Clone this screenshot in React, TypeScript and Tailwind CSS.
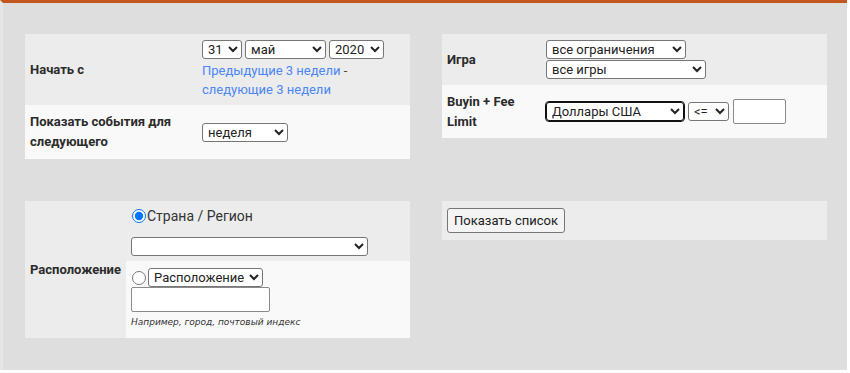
import React from 'react';

const selectCls =
  'h-[19px] bg-white border border-[#767676] rounded-[3px] text-[13px] leading-none text-[#222] pl-[1px] py-0';

const App: React.FC = () => {
  return (
    <div className="w-[850px] h-[373px] bg-white font-['Roboto',sans-serif] text-[#2b2b2b]">
      <div className="w-[847px] h-[370px] bg-[#dedede] border-t-[3px] border-l-[3px] border-t-[#c2581e] border-l-[#e6e6e6] pl-[22px] pt-[31px]">
        <div className="grid grid-cols-[385px_385px] gap-x-8 gap-y-[42px] items-start">
          {/* Date / period */}
          <div className="flex flex-col">
            <div className="flex bg-[#ececec] h-[71px]">
              <div className="w-[177px] pl-[5px] flex items-center text-[13px] font-bold">Начать с</div>
              <div className="pt-[6px]">
                <div className="flex gap-[3px]">
                  <select className={`${selectCls} w-[40px]`} defaultValue="31">
                    <option>31</option>
                  </select>
                  <select className={`${selectCls} w-[81px]`} defaultValue="май">
                    <option>май</option>
                  </select>
                  <select className={`${selectCls} w-[55px]`} defaultValue="2020">
                    <option>2020</option>
                  </select>
                </div>
                <div className="text-[13px] leading-[19px] mt-[2px]">
                  <a href="#" className="text-[#4a86f5]">Предыдущие 3 недели</a>
                  <span className="text-[#444]"> -</span>
                  <br />
                  <a href="#" className="text-[#4a86f5]">следующие 3 недели</a>
                </div>
              </div>
            </div>
            <div className="flex bg-[#f9f9f9] h-[54px]">
              <div className="w-[177px] pl-[5px] flex items-center text-[13px] font-bold leading-[20px]">
                Показать события для следующего
              </div>
              <div className="flex items-center">
                <select className={`${selectCls} w-[86px]`} defaultValue="неделя">
                  <option>неделя</option>
                </select>
              </div>
            </div>
          </div>

          {/* Game / limits */}
          <div className="flex flex-col">
            <div className="flex bg-[#ececec] h-[51px]">
              <div className="w-[104px] pl-[5px] flex items-center text-[13px] font-bold">Игра</div>
              <div className="pt-[6px] flex flex-col gap-[1px]">
                <select className={`${selectCls} w-[140px]`} defaultValue="все ограничения">
                  <option>все ограничения</option>
                </select>
                <select className={`${selectCls} w-[160px]`} defaultValue="все игры">
                  <option>все игры</option>
                </select>
              </div>
            </div>
            <div className="flex bg-[#f9f9f9] h-[53px]">
              <div className="w-[104px] pl-[5px] flex items-center text-[13px] font-bold leading-[20px]">
                Buyin + Fee Limit
              </div>
              <div className="flex items-center gap-[3px]">
                <select
                  className="h-[19px] w-[138px] bg-white border border-[#111] outline-1 outline-[#111] rounded-[3px] text-[13px] leading-none text-[#222] pl-[1px] py-0"
                  defaultValue="Доллары США"
                >
                  <option>Доллары США</option>
                </select>
                <select className={`${selectCls} ml-[1px] w-[41px] text-[11px]`} defaultValue="<=">
                  <option>&lt;=</option>
                </select>
                <input
                  type="text"
                  className="ml-[1px] w-[53px] h-[25px] bg-white border border-[#8a8a8a] rounded-[2px]"
                />
              </div>
            </div>
          </div>

          {/* Location */}
          <div className="flex bg-[#ececec] h-[137px]">
            <div className="w-[101px] pl-[5px] flex items-center text-[13px] font-bold">Расположение</div>
            <div className="flex-1 flex flex-col">
              <div className="h-[60px] pl-[5px] pt-[7px]">
                <label className="flex items-center h-[16px] text-[14px] text-[#333]">
                  <input type="radio" name="loc" defaultChecked className="w-[14px] h-[14px] m-0 mr-[1px] ml-[1px]" />
                  Страна / Регион
                </label>
                <select className={`${selectCls} w-[237px] mt-[13px] block`} defaultValue="">
                  <option value=""></option>
                </select>
              </div>
              <div className="flex-1 bg-[#f9f9f9] pl-[5px] pt-[7px]">
                <div className="flex items-center">
                  <input type="radio" name="loc" className="w-[14px] h-[14px] m-0 ml-[1px] mr-[2px]" />
                  <select className={`${selectCls} w-[115px] text-[13.5px] pl-0`} defaultValue="Расположение">
                    <option>Расположение</option>
                  </select>
                </div>
                <input
                  type="text"
                  className="block w-[139px] h-[25px] bg-white border border-[#8a8a8a] rounded-[2px]"
                />
                <div className="mt-[4px] text-[9px] italic font-['DejaVu_Sans',sans-serif] text-[#333]">
                  Например, город, почтовый индекс
                </div>
              </div>
            </div>
          </div>

          {/* Submit */}
          <div className="bg-[#ececec] h-[39px] pl-[5px] pt-[7px]">
            <button
              type="button"
              className="h-[25px] px-[6px] text-[13px] text-[#222] bg-[#f4f4f4] border border-[#767676] rounded-[3px]"
            >
              Показать список
            </button>
          </div>
        </div>
      </div>
    </div>
  );
};

export default App;
